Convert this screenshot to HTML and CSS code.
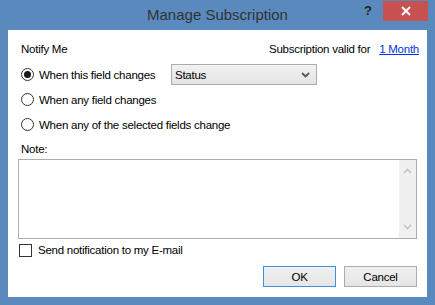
FILE: index.html
```html
<!DOCTYPE html>
<html lang="en">
<head>
	<meta charset="UTF-8">
	<title>Manage Subscription</title>
	<link rel="stylesheet" href="styles.css">
</head>
<body>

	<div class="window">
		<div class="titlebar">
			<div></div>
			<div class="title">Manage Subscription</div>
			<div class="controls">
				<span class="help">?</span>
				<span class="close">
					<svg width="10" height="10" viewBox="0 0 10 10"><path d="M1 1 L9 9 M9 1 L1 9" stroke="#fff" stroke-width="2" fill="none"/></svg>
				</span>
			</div>
		</div>

		<div class="client">
			<div class="top-row">
				<span>Notify Me</span>
				<span>Subscription valid for <a class="link" href="#">1 Month</a></span>
			</div>

			<div class="option first">
				<label class="radio-label"><span class="radio checked"></span>When this field changes</label>
				<div class="select">
					<span>Status</span>
					<svg width="9" height="6" viewBox="0 0 9 6"><path d="M1 1 L4.5 4.5 L8 1" stroke="#555" stroke-width="1.8" fill="none"/></svg>
				</div>
			</div>
			<div class="option">
				<label class="radio-label"><span class="radio"></span>When any field changes</label>
			</div>
			<div class="option">
				<label class="radio-label"><span class="radio"></span>When any of the selected fields change</label>
			</div>

			<div class="note-label">Note:</div>
			<div class="note">
				<div class="scrollbar">
					<svg width="9" height="6" viewBox="0 0 9 6"><path d="M1 5 L4.5 1.5 L8 5" stroke="#c4c4c4" stroke-width="1.6" fill="none"/></svg>
					<svg width="9" height="6" viewBox="0 0 9 6"><path d="M1 1 L4.5 4.5 L8 1" stroke="#c4c4c4" stroke-width="1.6" fill="none"/></svg>
				</div>
			</div>

			<label class="check-row"><span class="checkbox"></span>Send notification to my E-mail</label>

			<div class="buttons">
				<button class="btn default">OK</button>
				<button class="btn">Cancel</button>
			</div>
		</div>
	</div>

</body>
</html>
```

FILE: styles.css
```css
* {
	box-sizing: border-box;
}
body {
	margin: 0;
	font-family: "Liberation Sans", Arial, sans-serif;
	font-size: 11.5px;
	letter-spacing: -0.25px;
	color: #000;
}
.window {
	width: 435px;
	height: 305px;
	background: #5a8abd;
	display: flex;
	flex-direction: column;
}
.titlebar {
	height: 30px;
	display: grid;
	grid-template-columns: 75px 1fr 75px;
	letter-spacing: 0;
}
.title {
	text-align: center;
	font-size: 15px;
	line-height: 30px;
	color: #333;
}
.controls {
	display: flex;
	justify-content: flex-end;
	align-items: flex-start;
	padding: 1px 7px 0 0;
}
.help {
	font-size: 13px;
	font-weight: bold;
	line-height: 20px;
	color: #222;
	margin-right: 11px;
}
.close {
	width: 45px;
	height: 20px;
	background: #c75050;
	display: flex;
	align-items: center;
	justify-content: center;
}
.client {
	flex: 1;
	margin: 0 8px 8px;
	background: #fff;
	padding: 11px 10px 10px;
	display: flex;
	flex-direction: column;
}
.top-row {
	height: 16px;
	line-height: 16px;
	padding-left: 3px;
	margin-right: -2px;
	display: flex;
	justify-content: space-between;
}
.link {
	color: #0033ee;
	margin-left: 6px;
}
.option {
	height: 21px;
	margin-top: 4px;
	display: grid;
	grid-template-columns: 153px 146px;
	align-items: center;
}
.option.first {
	margin-top: 7px;
}
.radio-label {
	display: flex;
	align-items: center;
	white-space: nowrap;
	padding-left: 3px;
}
.radio {
	width: 13px;
	height: 13px;
	border: 1px solid #333;
	border-radius: 50%;
	margin-right: 5px;
	display: flex;
	align-items: center;
	justify-content: center;
	flex-shrink: 0;
}
.radio.checked::after {
	content: "";
	width: 7px;
	height: 7px;
	border-radius: 50%;
	background: #1a1a1a;
}
.select {
	height: 21px;
	border: 1px solid #acacac;
	background: linear-gradient(#f2f2f2, #e4e4e4);
	padding: 0 6px 0 3px;
	display: flex;
	align-items: center;
	justify-content: space-between;
}
.note-label {
	margin-top: 6px;
	height: 16px;
	line-height: 16px;
	padding-left: 3px;
}
.note {
	margin-top: 2px;
	height: 80px;
	border: 1px solid #abadb3;
	display: flex;
	justify-content: flex-end;
}
.scrollbar {
	width: 17px;
	background: #f0f0f0;
	display: flex;
	flex-direction: column;
	align-items: center;
	justify-content: space-between;
	padding: 8px 0 8px;
}
.check-row {
	margin-top: 3px;
	height: 16px;
	display: flex;
	align-items: center;
	padding-left: 1px;
}
.checkbox {
	width: 13px;
	height: 13px;
	border: 1px solid #333;
	background: #fff;
	margin-right: 6px;
}
.buttons {
	margin-top: 8px;
	display: flex;
	justify-content: flex-end;
	gap: 8px;
}
.btn {
	width: 73px;
	height: 21px;
	border: 1px solid #acacac;
	background: linear-gradient(#f0f0f0, #e5e5e5);
	font-family: "Liberation Sans", Arial, sans-serif;
	font-size: 11.5px;
	letter-spacing: -0.25px;
	color: #000;
	padding: 0;
}
.btn.default {
	border-color: #3c8ee0;
}
```
